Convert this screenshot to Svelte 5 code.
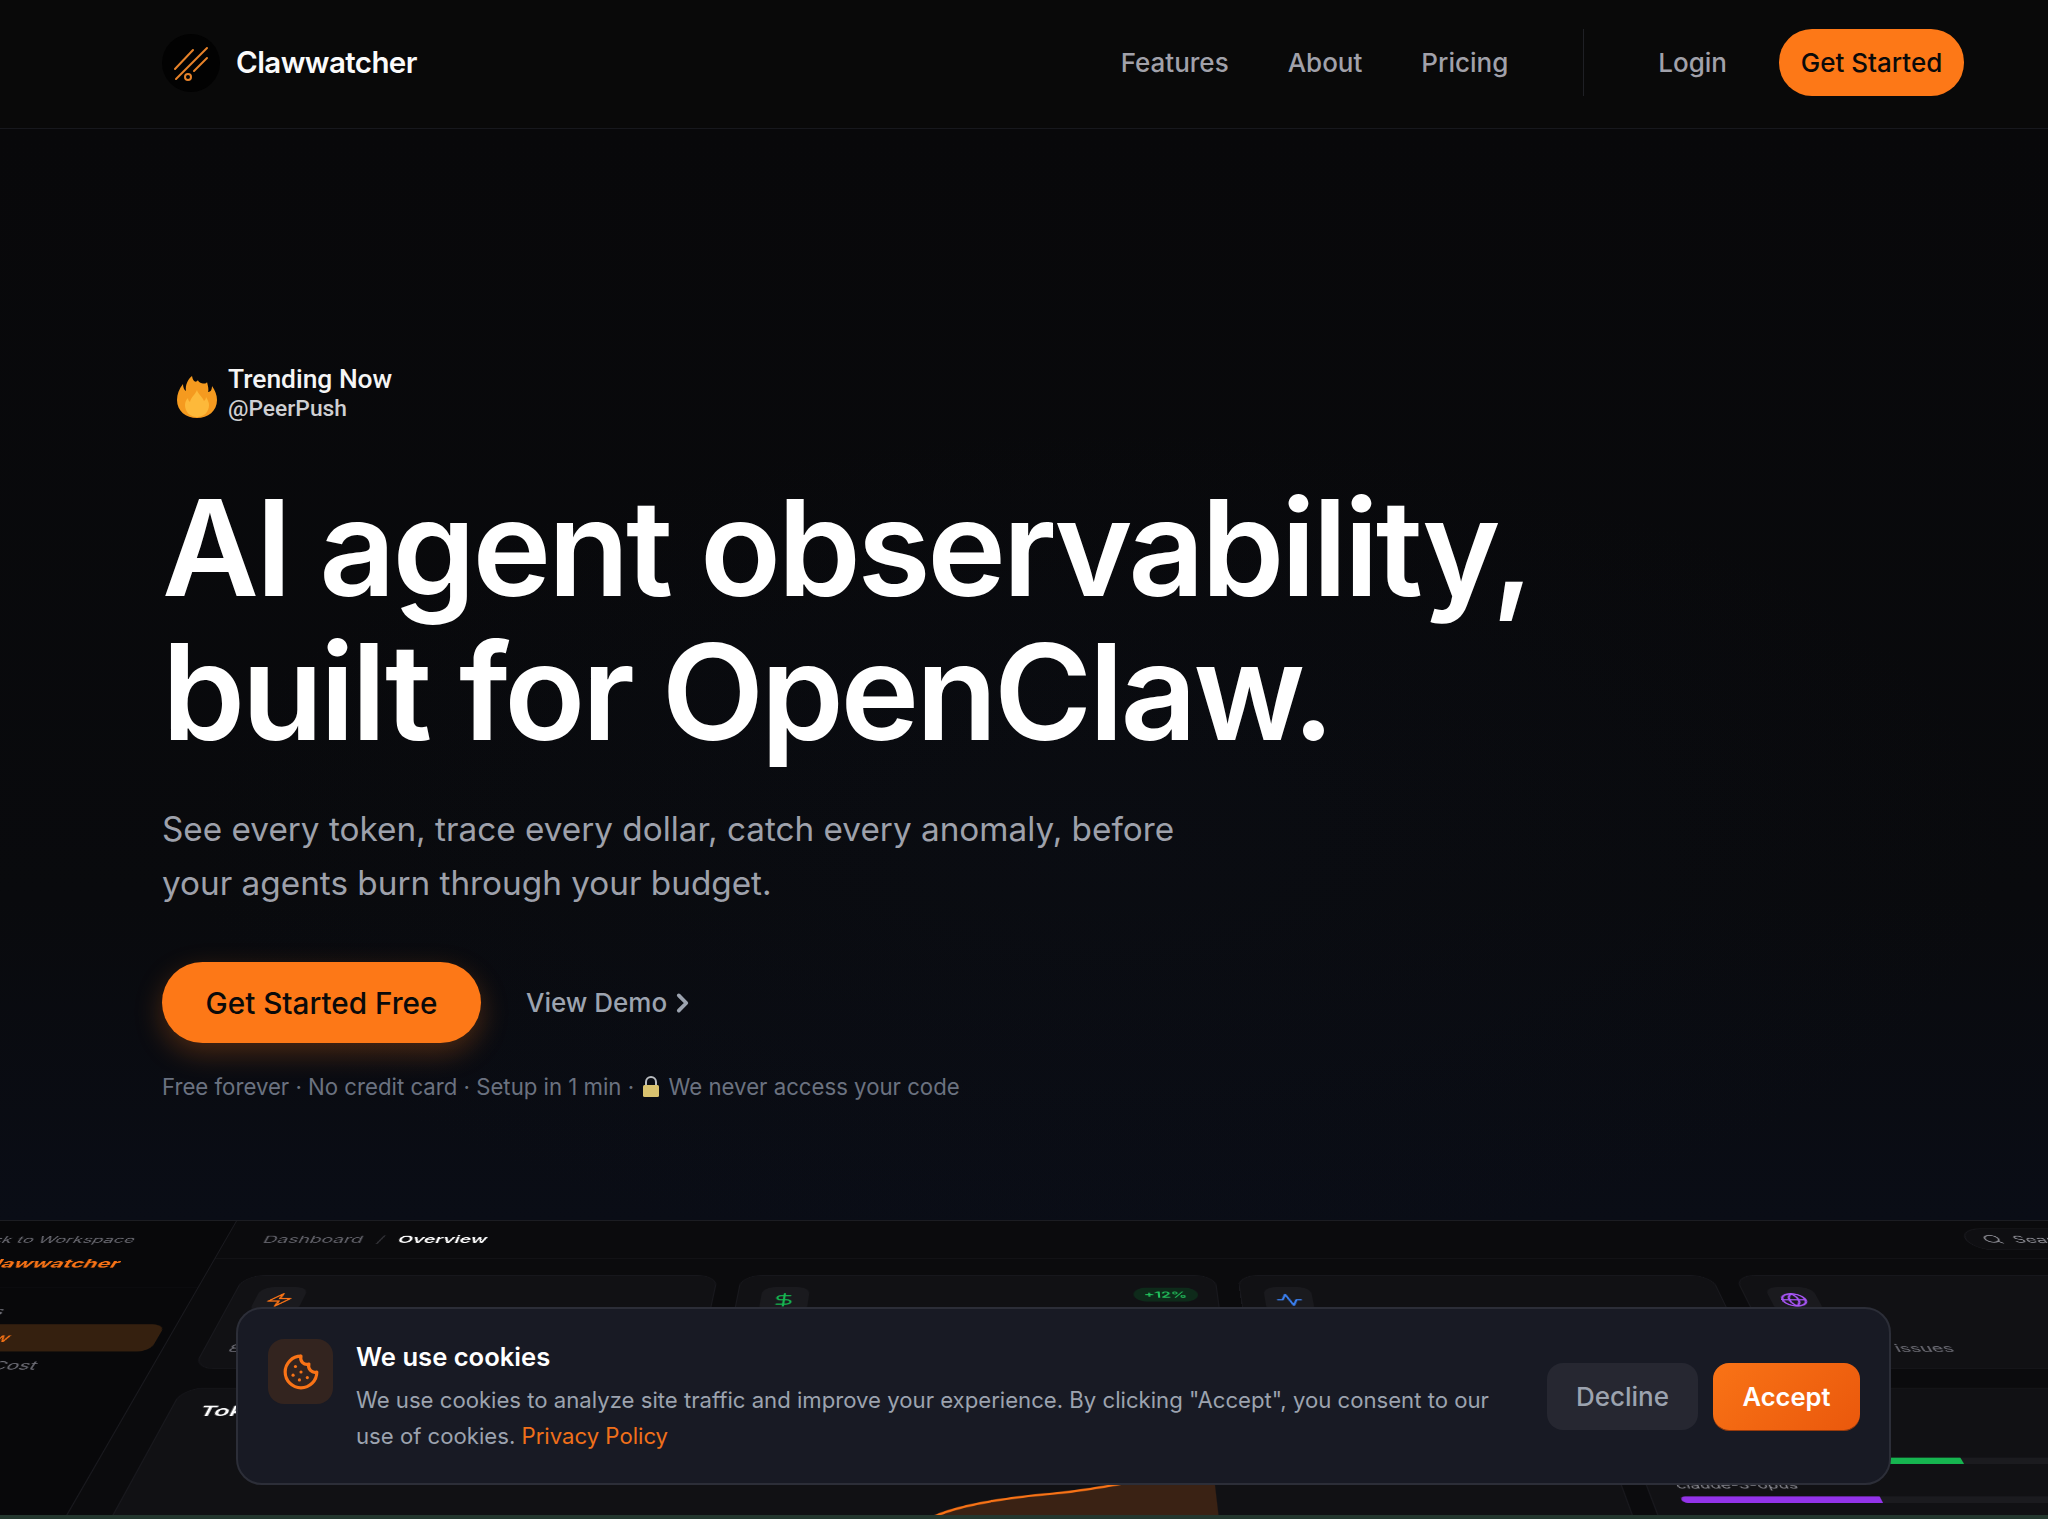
<script lang="ts">
	const navLinks = ['Features', 'About', 'Pricing'];
	const sideItems = [
		{ label: 'Agents', active: false },
		{ label: 'Overview', active: true },
		{ label: 'Tokens & Cost', active: false }
	];
	const models = [
		{ name: 'gpt-4o', share: 44, color: '#16b550' },
		{ name: 'claude-3-opus', share: 29, color: '#9333ea' }
	];
</script>

<div class="page">
	<header class="nav">
		<a class="brand" href="#home">
			<span class="logo">
				<svg viewBox="0 0 58 58" width="58" height="58">
					<circle cx="29" cy="29" r="29" fill="#020202" />
					<g fill="none" stroke="#e8832a" stroke-width="2" stroke-linecap="round">
						<path d="M13 35 31 16" />
						<path d="M14 45 45 14" />
						<path d="M32 37 45 24" />
						<circle cx="26" cy="43" r="3" />
					</g>
				</svg>
			</span>
			<span class="brand-name">Clawwatcher</span>
		</a>
		<nav class="links">
			{#each navLinks as link}
				<a href="#{link}">{link}</a>
			{/each}
		</nav>
		<span class="divider"></span>
		<a class="login" href="#login">Login</a>
		<a class="nav-cta" href="#start">Get Started</a>
	</header>

	<section class="hero">
		<div class="trending">
			<svg class="fire" viewBox="0 0 40 42" width="40" height="42">
				<path
					d="M15 0c1 6 4 7 6 4 0 3 8 5 9 2 1 4 2 8 1 10 3 0 4-3 4-6 3 4 5 9 5 14 0 11-9 18-20 18S0 35 0 24c0-6 2-11 6-16 0 3 1 6 3 7C8 9 11 3 15 0z"
					fill="#f59a1f"
				/>
				<path
					d="M20 14c1 4 5 6 7 11 1-1 2-2 2-4 2 3 3 6 3 8 0 7-5 12-12 12S8 36 8 29c0-3 1-5 3-7 0 2 1 3 2 4 1-5 5-7 7-12z"
					fill="#fdb93a"
				/>
			</svg>
			<div class="trending-text">
				<strong>Trending Now</strong>
				<span>@PeerPush</span>
			</div>
		</div>

		<h1>AI agent observability,<br />built for OpenClaw.</h1>
		<p class="sub">See every token, trace every dollar, catch every anomaly, before<br />your agents burn through your budget.</p>

		<div class="actions">
			<a class="cta" href="#start">Get Started Free</a>
			<a class="demo" href="#demo">
				View Demo
				<svg viewBox="0 0 24 24" width="26" height="26" fill="none" stroke="currentColor" stroke-width="3.4" stroke-linecap="round" stroke-linejoin="round">
					<path d="m9 5 7 7-7 7" />
				</svg>
			</a>
		</div>

		<p class="fine">
			Free forever · No credit card · Setup in 1 min ·
			<svg class="lock" viewBox="0 0 20 24" width="20" height="24">
				<path d="M5 11V7a5 5 0 0 1 10 0v4" fill="none" stroke="#b9bcc0" stroke-width="2" />
				<rect x="2" y="10" width="16" height="12" rx="1.5" fill="#d9c26f" />
			</svg>
			We never access your code
		</p>
	</section>

	<div class="stage">
		<div class="preview">
			<aside class="side">
				<div class="side-head">
					<span class="back">Back to Workspace</span>
					<span class="side-brand">Clawwatcher</span>
				</div>
				<ul class="side-list">
					{#each sideItems as item}
						<li class:active={item.active}>{item.label}</li>
					{/each}
				</ul>
			</aside>
			<div class="main">
				<div class="topbar">
					<span class="crumb">Dashboard</span>
					<span class="slash">/</span>
					<span class="crumb-now">Overview</span>
					<span class="search">
						<svg viewBox="0 0 24 24" width="20" height="20" fill="none" stroke="#8b8b93" stroke-width="2" stroke-linecap="round">
							<circle cx="11" cy="11" r="8" />
							<path d="m21 21-4.3-4.3" />
						</svg>
						Search...
					</span>
				</div>
				<div class="content">
					<div class="stats">
						<div class="stat">
							<span class="stat-icon">
								<svg viewBox="0 0 24 24" width="26" height="26" fill="none" stroke="#f97316" stroke-width="2" stroke-linecap="round" stroke-linejoin="round">
									<path d="M13 2 3 14h9l-1 8 10-12h-9l1-8z" />
								</svg>
							</span>
							<p class="stat-note">8 agents running</p>
						</div>
						<div class="stat">
							<span class="stat-icon">
								<svg viewBox="0 0 24 24" width="26" height="26" fill="none" stroke="#16b550" stroke-width="2" stroke-linecap="round" stroke-linejoin="round">
									<path d="M12 2v20" />
									<path d="M17 5H9.5a3.5 3.5 0 0 0 0 7h5a3.5 3.5 0 0 1 0 7H6" />
								</svg>
							</span>
							<span class="badge">+12%</span>
							<p class="stat-note">This month</p>
						</div>
						<div class="stat">
							<span class="stat-icon">
								<svg viewBox="0 0 24 24" width="26" height="26" fill="none" stroke="#3b82f6" stroke-width="2" stroke-linecap="round" stroke-linejoin="round">
									<path d="M22 12h-4l-3 9L9 3l-3 9H2" />
								</svg>
							</span>
							<p class="stat-note">Last 24 hours</p>
						</div>
						<div class="stat">
							<span class="stat-icon">
								<svg viewBox="0 0 24 24" width="26" height="26" fill="none" stroke="#a855f7" stroke-width="2" stroke-linecap="round" stroke-linejoin="round">
									<circle cx="12" cy="12" r="10" />
									<path d="M12 2a14.5 14.5 0 0 0 0 20 14.5 14.5 0 0 0 0-20" />
									<path d="M2 12h20" />
								</svg>
							</span>
							<p class="stat-note">All clear, 2 issues</p>
						</div>
					</div>
					<div class="panels">
						<div class="chart">
							<h3>Token Usage</h3>
							<svg class="area" viewBox="0 0 1250 190" width="1250" height="190">
								<path d="M676 187C696 172 730 163 767 157C790 154 812 148 835 141C870 134 888 128 909 120V190H676Z" fill="#3a2214" />
								<path d="M676 187C696 172 730 163 767 157C790 154 812 148 835 141C870 134 888 128 909 120" fill="none" stroke="#f97316" stroke-width="3" />
							</svg>
						</div>
						<div class="usage">
							{#each models as model}
								<div class="model">
									<span class="model-name">{model.name}</span>
									<div class="track"><div class="fill" style="width: {model.share}%; background: {model.color}"></div></div>
								</div>
							{/each}
						</div>
					</div>
				</div>
			</div>
		</div>
	</div>
	<div class="strip"></div>

	<div class="cookies">
		<span class="cookie-icon">
			<svg viewBox="0 0 24 24" width="38" height="38" fill="none" stroke="#f97316" stroke-width="2" stroke-linecap="round" stroke-linejoin="round">
				<path d="M12 2a10 10 0 1 0 10 10 4 4 0 0 1-5-5 4 4 0 0 1-5-5" />
				<path d="M8.5 8.5v.01" />
				<path d="M16 15.5v.01" />
				<path d="M12 12v.01" />
				<path d="M11 17v.01" />
				<path d="M7 14v.01" />
			</svg>
		</span>
		<div class="cookie-text">
			<h4>We use cookies</h4>
			<p>We use cookies to analyze site traffic and improve your experience. By clicking "Accept", you consent to our use of cookies. <a href="#privacy">Privacy Policy</a></p>
		</div>
		<div class="cookie-actions">
			<button class="decline">Decline</button>
			<button class="accept">Accept</button>
		</div>
	</div>
</div>

<style>
	:global(body) {
		margin: 0;
		background: #0a0a0a;
	}
	.page {
		position: relative;
		width: 2048px;
		height: 1519px;
		overflow: hidden;
		display: flex;
		flex-direction: column;
		font-family: Inter, 'Liberation Sans', sans-serif;
		color: #fff;
		background:
			radial-gradient(ellipse 1300px 600px at 1100px 850px, rgba(15, 23, 42, 0.18), transparent 70%),
			linear-gradient(180deg, #08080a 130px, #090a0d 900px, #0a0d16 1220px);
	}
	a {
		text-decoration: none;
		color: inherit;
	}

	.nav {
		flex: none;
		height: 129px;
		box-sizing: border-box;
		display: flex;
		align-items: center;
		padding: 0 84px 3px 162px;
		background: #090909;
		border-bottom: 1px solid #17181d;
	}
	.brand {
		display: flex;
		align-items: center;
		gap: 16px;
		margin-right: auto;
	}
	.logo {
		display: flex;
	}
	.brand-name {
		margin-bottom: 2px;
		font-size: 29.5px;
		font-weight: 600;
		letter-spacing: -0.02em;
		color: #fafafa;
	}
	.links {
		display: flex;
		gap: 59px;
		font-size: 26px;
		font-weight: 500;
		color: #a1a1aa;
	}
	.divider {
		width: 1px;
		height: 67px;
		margin: 0 74px 0 75px;
		background: #1f2025;
	}
	.login {
		font-size: 26px;
		font-weight: 500;
		color: #a1a1aa;
		margin-right: 52px;
	}
	.nav-cta {
		height: 67px;
		width: 185px;
		display: flex;
		align-items: center;
		justify-content: center;
		border-radius: 33px;
		background: #fd7817;
		color: #0a0a0a;
		font-size: 26px;
		font-weight: 500;
	}

	.hero {
		flex: 1;
		min-height: 0;
		padding: 235px 0 0 162px;
	}
	.trending {
		display: flex;
		align-items: center;
		gap: 11px;
		margin-left: 15px;
	}
	.fire {
		margin-top: 6px;
	}
	.trending-text {
		display: flex;
		flex-direction: column;
		font-family: Roboto, sans-serif;
	}
	.trending-text strong {
		font-size: 26.4px;
		font-weight: 500;
		line-height: 30px;
		color: #f5f5f5;
	}
	.trending-text span {
		font-size: 22.8px;
		font-weight: 500;
		line-height: 30px;
		color: #cfcfd2;
	}
	h1 {
		margin: 52px 0 0;
		font-size: 133.2px;
		font-weight: 600;
		line-height: 143.5px;
		letter-spacing: -0.025em;
		color: #fff;
	}
	.sub {
		margin: 40px 0 0;
		font-size: 33.3px;
		line-height: 53.5px;
		color: #9ea1ab;
	}
	.actions {
		display: flex;
		align-items: center;
		gap: 45px;
		margin-top: 52px;
	}
	.cta {
		width: 319px;
		height: 81px;
		display: flex;
		align-items: center;
		justify-content: center;
		border-radius: 41px;
		background: #fd7817;
		color: #0a0a0a;
		font-size: 29.7px;
		font-weight: 500;
		box-shadow: 0 10px 28px rgba(249, 115, 22, 0.28);
	}
	.demo {
		display: flex;
		align-items: center;
		gap: 2px;
		font-size: 26px;
		font-weight: 500;
		color: #9ca3af;
	}
	.fine {
		margin: 27px 0 0;
		font-size: 22.2px;
		line-height: 34px;
		color: #6b7280;
	}
	.lock {
		margin: 0 1px;
		vertical-align: -4px;
	}

	.stage {
		flex: none;
		height: 294px;
		overflow: hidden;
		perspective: 2362px;
		perspective-origin: 50% 0;
		border-top: 1px solid #1c1d22;
	}
	.preview {
		width: 2227px;
		height: 560px;
		margin-left: -20px;
		display: flex;
		background: #0b0b0d;
		transform-origin: 50% 0;
		transform: rotateX(60deg);
	}
	.side {
		flex: none;
		width: 257px;
		box-sizing: border-box;
		background: #08080a;
		border-right: 1px solid #1a1a1f;
	}
	.side-head {
		height: 128px;
		box-sizing: border-box;
		padding: 25px 0 0 14px;
		display: flex;
		flex-direction: column;
		gap: 20px;
		border-bottom: 1px solid #17171b;
	}
	.back {
		margin-left: -9px;
		font-size: 17.7px;
		line-height: 24px;
		color: #6b6b73;
	}
	.side-brand {
		margin-left: 18px;
		font-size: 21px;
		line-height: 28px;
		font-weight: 700;
		color: #f97316;
		white-space: nowrap;
	}
	.side-list {
		list-style: none;
		margin: 18px 10px 0 0;
		padding: 0;
		display: flex;
		flex-direction: column;
		font-size: 18.5px;
		color: #71717a;
	}
	.side-list li {
		height: 46px;
		line-height: 46px;
		padding-left: 26px;
		border-radius: 12px;
	}
	.side-list .active {
		color: #f97316;
		font-weight: 500;
		background: #35200f;
	}
	.main {
		flex: 1;
		min-width: 0;
	}
	.topbar {
		height: 73px;
		box-sizing: border-box;
		display: flex;
		align-items: center;
		padding: 0 0 0 37px;
		font-size: 19px;
		border-bottom: 1px solid #18181c;
	}
	.crumb {
		color: #63636b;
	}
	.slash {
		margin: 0 14px;
		color: #3a3a40;
	}
	.crumb-now {
		color: #fff;
		font-weight: 600;
	}
	.search {
		margin-left: 1459px;
		width: 240px;
		height: 42px;
		box-sizing: border-box;
		padding-left: 16px;
		display: flex;
		align-items: center;
		gap: 10px;
		border: 1px solid #1e1e23;
		border-radius: 21px;
		background: #0f0f12;
		color: #8b8b93;
		font-size: 18px;
	}
	.content {
		padding: 31px 37px 0;
	}
	.stats {
		display: grid;
		grid-template-columns: repeat(4, 456px);
		gap: 21.5px;
	}
	.stat {
		position: relative;
		height: 163px;
		box-sizing: border-box;
		padding: 21px 22px;
		border: 1px solid #19191e;
		border-radius: 20px;
		background: #111114;
	}
	.stat-icon {
		width: 45px;
		height: 45px;
		display: flex;
		align-items: center;
		justify-content: center;
		border-radius: 12px;
		background: #1a1a1e;
	}
	.badge {
		position: absolute;
		top: 22px;
		right: 18px;
		padding: 3px 10px;
		border-radius: 16px;
		background: #0e2a1a;
		color: #22c55e;
		font-size: 15px;
		font-weight: 600;
	}
	.stat-note {
		margin: 50px 0 0;
		font-size: 17.6px;
		line-height: 24px;
		color: #71717a;
		white-space: nowrap;
	}
	.panels {
		display: grid;
		grid-template-columns: 2fr 1fr;
		gap: 20px;
		margin-top: 30px;
	}
	.chart,
	.usage {
		height: 300px;
		box-sizing: border-box;
		border: 1px solid #19191e;
		border-radius: 20px;
		background: #111114;
	}
	.chart {
		padding: 22px 26px;
		position: relative;
		overflow: hidden;
	}
	.chart h3 {
		margin: 0;
		font-size: 22px;
		font-weight: 600;
		color: #fff;
	}
	.area {
		position: absolute;
		left: 0;
		top: 0;
	}
	.usage {
		padding: 77px 27px 0 24.5px;
		display: flex;
		flex-direction: column;
		gap: 18px;
	}
	.model-name {
		display: block;
		font-size: 14.5px;
		line-height: 24px;
		color: #8b8b93;
		margin-bottom: 4px;
	}
	.track {
		height: 9px;
		border-radius: 5px;
		background: #1b1b1f;
		overflow: hidden;
	}
	.fill {
		height: 100%;
	}
	.strip {
		flex: none;
		height: 4px;
		background: #24382f;
	}

	.cookies {
		position: absolute;
		left: 236px;
		top: 1307px;
		width: 1655px;
		height: 178px;
		box-sizing: border-box;
		padding: 30px 29px 0 30px;
		display: flex;
		align-items: flex-start;
		gap: 23px;
		background: #181a24;
		border: 2px solid #2c2e38;
		border-radius: 26px;
	}
	.cookie-icon {
		flex: none;
		width: 65px;
		height: 65px;
		display: flex;
		align-items: center;
		justify-content: center;
		border-radius: 16px;
		background: #33241f;
	}
	.cookie-text {
		flex: 1;
		min-width: 0;
	}
	h4 {
		margin: -1px 0 0;
		font-size: 25.6px;
		font-weight: 600;
		line-height: 38px;
		color: #fff;
	}
	.cookie-text p {
		margin: 6px 0 0;
		width: 1150px;
		font-size: 22.15px;
		line-height: 36px;
		color: #9ca3af;
	}
	.cookie-text a {
		color: #f0701a;
	}
	.cookie-actions {
		flex: none;
		display: flex;
		gap: 15px;
		margin-top: 24px;
	}
	button {
		height: 67px;
		border: 0;
		border-radius: 16px;
		font-family: inherit;
	}
	.decline {
		width: 151px;
		background: #262731;
		color: #9ca3af;
		font-size: 26px;
		font-weight: 500;
	}
	.accept {
		width: 147px;
		background: linear-gradient(135deg, #f97316, #ea580c);
		color: #fff;
		font-size: 25.5px;
		font-weight: 600;
		box-shadow: 0 1px 0 #9a3a0a;
	}
</style>
